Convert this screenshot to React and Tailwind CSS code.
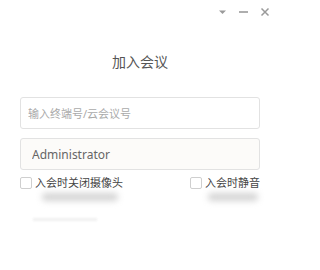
import { useState } from "react";

const font = { fontFamily: '"Noto Sans", "Noto Sans CJK SC", sans-serif' };

const TitleBar = () => (
  <div className="flex h-[22px] items-center justify-end gap-[11px] pr-[10px] pt-[1px]">
    {/* dropdown */}
    <svg width="9" height="6" viewBox="0 0 9 6">
      <path d="M1 1.5h7L4.5 5z" fill="#9a9a9a" />
    </svg>
    {/* minimize */}
    <svg width="11" height="10" viewBox="0 0 11 10">
      <path d="M1 5h9" stroke="#9a9a9a" strokeWidth="1.6" />
    </svg>
    {/* close */}
    <svg width="10" height="10" viewBox="0 0 10 10">
      <path d="M1.5 1.5l7 7M8.5 1.5l-7 7" stroke="#9a9a9a" strokeWidth="1.5" />
    </svg>
  </div>
);

const Check = ({ label, checked, onChange }) => (
  <label className="flex cursor-pointer items-center gap-[3px]">
    <span
      onClick={onChange}
      className={`h-[12px] w-[12px] rounded-[2px] border ${checked ? "border-[#3b82f6] bg-[#3b82f6]" : "border-[#cfcfcf] bg-white"}`}
    />
    <span className="text-[11px] leading-[14px] text-[#444]">{label}</span>
  </label>
);

export default function App() {
  const [room, setRoom] = useState("");
  const [name, setName] = useState("Administrator");
  const [camOff, setCamOff] = useState(false);
  const [mute, setMute] = useState(false);

  return (
    <div className="h-[270px] w-[280px] overflow-hidden bg-white" style={font}>
      <TitleBar />

      <div className="mt-[30px] text-center text-[14px] leading-[20px] text-[#555]">加入会议</div>

      <div className="mt-[25px] flex flex-col gap-[9px] px-[20px]">
        <input
          value={room}
          onChange={(e) => setRoom(e.target.value)}
          placeholder="输入终端号/云会议号"
          className="h-[32px] w-full rounded-[3px] border border-[#e2e2e2] bg-white px-[7px] text-[11px] text-[#555] outline-none placeholder:text-[#aaa]"
          style={font}
        />
        <input
          value={name}
          onChange={(e) => setName(e.target.value)}
          className="h-[32px] w-full rounded-[3px] border border-[#e2e2e2] bg-[#fcfbf9] px-[11px] text-[12px] text-[#666] outline-none"
          style={font}
        />
      </div>

      <div className="mt-[6px] flex items-center justify-between px-[20px]">
        <Check label="入会时关闭摄像头" checked={camOff} onChange={() => setCamOff(!camOff)} />
        <Check label="入会时静音" checked={mute} onChange={() => setMute(!mute)} />
      </div>

      {/* faint blurred shadows under the labels */}
      <div className="mt-[3px] flex justify-between pl-[42px] pr-[22px]">
        <div className="h-[8px] w-[76px] rounded-full bg-[#d4d4d4] blur-[3px]" />
        <div className="h-[8px] w-[50px] rounded-full bg-[#d4d4d4] blur-[3px]" />
      </div>
      <div className="ml-[33px] mt-[17px] h-[3px] w-[64px] bg-[#f0f0f0] blur-[1px]" />
    </div>
  );
}
